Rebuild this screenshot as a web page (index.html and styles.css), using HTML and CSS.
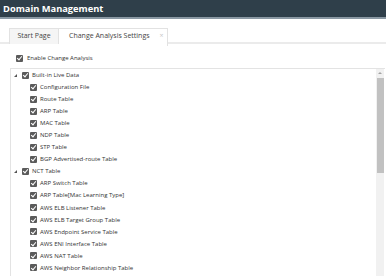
FILE: index.html
```html
<!DOCTYPE html>
<html>
<head>
<meta charset="utf-8">
<link rel="stylesheet" href="styles.css">
</head>
<body>
<div class="app">
  <header class="app-header">Domain Management</header>
  <nav class="tabs">
    <div class="tab">Start Page</div>
    <div class="tab active">Change Analysis Settings<span class="close">×</span></div>
  </nav>
  <div class="content">
    <label class="enable"><span class="cb"></span>Enable Change Analysis</label>
    <div class="tree-box">
      <ul class="tree">
        <li class="node root"><span class="tri"></span><span class="cb"></span>Built-in Live Data</li>
        <li class="node leaf"><span class="cb"></span>Configuration File</li>
        <li class="node leaf"><span class="cb"></span>Route Table</li>
        <li class="node leaf"><span class="cb"></span>ARP Table</li>
        <li class="node leaf"><span class="cb"></span>MAC Table</li>
        <li class="node leaf"><span class="cb"></span>NDP Table</li>
        <li class="node leaf"><span class="cb"></span>STP Table</li>
        <li class="node leaf"><span class="cb"></span>BGP Advertised-route Table</li>
        <li class="node root"><span class="tri"></span><span class="cb"></span>NCT Table</li>
        <li class="node leaf"><span class="cb"></span>ARP Switch Table</li>
        <li class="node leaf"><span class="cb"></span>ARP Table[Mac Learning Type]</li>
        <li class="node leaf"><span class="cb"></span>AWS ELB Listener Table</li>
        <li class="node leaf"><span class="cb"></span>AWS ELB Target Group Table</li>
        <li class="node leaf"><span class="cb"></span>AWS Endpoint Service Table</li>
        <li class="node leaf"><span class="cb"></span>AWS ENI Interface Table</li>
        <li class="node leaf"><span class="cb"></span>AWS NAT Table</li>
        <li class="node leaf"><span class="cb"></span>AWS Neighbor Relationship Table</li>
      </ul>
      <div class="scrollbar"><div class="arrow"></div><div class="thumb"></div></div>
    </div>
  </div>
</div>
</body>
</html>
```
FILE: styles.css
```css
* { box-sizing: border-box; }
html, body { margin: 0; padding: 0; background: #fff; }
body { font-family: "Open Sans", "Liberation Sans", sans-serif; color: #333; overflow: hidden; width: 386px; height: 276px; }
.app { display: flex; flex-direction: column; height: 276px; }
.app-header {
  height: 19px;
  background: #2f3f4a;
  border-bottom: 2px solid #8a98a3;
  color: #fff;
  font-weight: 700;
  font-size: 9.3px;
  line-height: 17px;
  padding-left: 3px;
}
.tabs {
  display: flex;
  margin-top: 9px;
  padding-left: 9px;
  height: 16px;
  border-bottom: 2px solid #ebebeb;
}
.tab {
  height: 16px;
  font-size: 7px;
  line-height: 14px;
  background: #f5f5f5;
  border: 1px solid #e2e2e2;
  border-bottom: none;
  color: #444;
  width: 50px;
  text-align: center;
  white-space: nowrap;
}
.tab.active {
  background: #fff;
  width: 109px;
  padding: 0 0 0 10px;
  text-align: left;
  margin-bottom: -2px;
  height: 18px;
  border-left: none;
}
.close { color: #c8c8c8; font-size: 7px; margin-left: 10px; }
.content { flex: 1; display: flex; flex-direction: column; }
.enable {
  display: flex;
  align-items: center;
  height: 10px;
  margin: 9px 0 0 16px;
  font-size: 6px;
  color: #333;
}
.enable .cb { margin-right: 4px; }
.cb {
  width: 7px; height: 7px;
  background: #5b5b5b;
  border-radius: 1px;
  position: relative;
  flex: none;
}
.cb::after {
  content: "";
  position: absolute;
  left: 2px; top: 0.5px;
  width: 2px; height: 4px;
  border: solid #fff;
  border-width: 0 1px 1px 0;
  transform: rotate(40deg);
}
.tree-box {
  flex: 1;
  margin: 5px 1px 0 10px;
  border-left: 1px solid #e3e3e3;
  border-top: 1px solid #e3e3e3;
  display: flex;
  overflow: hidden;
}
.tree { list-style: none; margin: 0; padding: 0; flex: 1; }
.node { display: flex; align-items: center; height: 12.05px; font-size: 6px; color: #333; white-space: nowrap; }
.node .cb { margin-right: 3px; }
.root { padding-left: 3px; }
.leaf { padding-left: 19px; }
.tri {
  width: 0; height: 0;
  border-left: 3px solid transparent;
  border-bottom: 3px solid #555;
  margin-right: 5px;
  margin-top: 1px;
}
.scrollbar {
  width: 8px;
  background: #f1f1f1;
  margin-right: 1px;
  display: flex;
  flex-direction: column;
  align-items: center;
  padding-top: 3px;
}
.arrow {
  width: 0; height: 0;
  border-left: 2px solid transparent;
  border-right: 2px solid transparent;
  border-bottom: 2px solid #a3a3a3;
  margin-bottom: 4px;
}
.thumb { width: 7px; height: 95px; background: #c1c1c1; }
```
